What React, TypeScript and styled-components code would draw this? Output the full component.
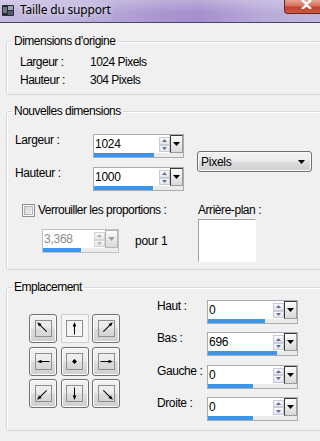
import styled, { createGlobalStyle } from 'styled-components';

const GlobalStyle = createGlobalStyle`
    html, body {
        margin: 0;
        padding: 0;
        background: #f0f0f0;
    }
    body {
        font-family: "Liberation Sans", Arial, sans-serif;
        font-size: 11px;
        letter-spacing: -0.25px;
        color: #000;
    }
`;

const Window = styled.div`
    width: 320px;
    height: 441px;
    overflow: hidden;
    background: #f0f0f0;
    display: flex;
    flex-direction: column;
`;

const TitleBar = styled.div`
    height: 22px;
    flex: none;
    display: flex;
    align-items: flex-start;
    border-bottom: 1px solid #4a465c;
    background:
        linear-gradient(180deg, rgba(255, 255, 255, 0.25) 0%, rgba(255, 255, 255, 0) 60%),
        linear-gradient(90deg, #c4b9e0 0%, #bcafdb 25%, #a896cf 50%, #a48fcc 62%, #b8aad9 82%, #c2b6df 100%);
`;

const AppIcon = styled.svg`
    flex: none;
    margin: 5px 0 0 2px;
`;

const Title = styled.span`
    margin-left: 6px;
    font-family: "Noto Sans", "Open Sans", sans-serif;
    font-size: 12px;
    letter-spacing: -0.2px;
    line-height: 20px;
    color: #000;
    text-shadow: 0 0 6px rgba(255, 255, 255, 0.9);
`;

const CloseButton = styled.div`
    margin-left: auto;
    margin-right: -8px;
    width: 44px;
    height: 14px;
    box-sizing: border-box;
    border: 1px solid #5c2a26;
    border-top: none;
    border-radius: 0 0 4px 4px;
    display: flex;
    justify-content: center;
    align-items: flex-start;
    background: linear-gradient(180deg, #e7a394 0%, #d8705e 45%, #c2412c 55%, #c95a40 100%);
`;

const Body = styled.div`
    display: flex;
    flex-direction: column;
    padding: 12px 0 0 6px;
`;

const Group = styled.fieldset<{ $gap?: number }>`
    margin: ${(p) => p.$gap ?? 0}px 0 0 0;
    padding: 0;
    min-width: 0;
    width: 330px;
    box-sizing: border-box;
    border: 1px solid #d5d9dd;
    border-radius: 3px;
    box-shadow: inset 1px 1px 0 #fff;
`;

const Legend = styled.legend`
    margin-left: 5px;
    padding: 0 2px;
    line-height: 13px;
    font-size: 12px;
    letter-spacing: -0.5px;
`;

const InfoGrid = styled.div`
    display: grid;
    grid-template-columns: 70px auto;
    grid-auto-rows: 18px;
    align-items: center;
    padding: 5px 0 5px 13px;
    font-size: 12px;
    letter-spacing: -0.5px;
`;

const GroupContent = styled.div<{ $pad: string }>`
    padding: ${(p) => p.$pad};
`;

const Row = styled.div<{ $top?: number }>`
    display: flex;
    align-items: flex-start;
    margin-top: ${(p) => p.$top ?? 0}px;
`;

const FieldStack = styled.div<{ $gap: number }>`
    display: flex;
    flex-direction: column;
    gap: ${(p) => p.$gap}px;
`;

const FieldRow = styled.div`
    display: flex;
    align-items: flex-start;
`;

const FieldLabel = styled.span<{ $width: number }>`
    width: ${(p) => p.$width}px;
    line-height: 13px;
    flex: none;
    font-size: 12px;
    letter-spacing: -0.4px;
`;

/* spin field */
const SpinBox = styled.div<{ $width: number; $disabled?: boolean }>`
    width: ${(p) => p.$width}px;
    height: 24px;
    box-sizing: border-box;
    flex: none;
    border: 1px solid ${(p) => (p.$disabled ? '#c2c2c2' : '#a9acb2')};
    background: #fff;
    display: flex;
    flex-direction: column;
`;

const SpinTop = styled.div`
    height: 18px;
    display: flex;
`;

const SpinText = styled.span<{ $disabled?: boolean }>`
    flex: 1;
    padding-left: 1px;
    font-size: 12px;
    line-height: 19px;
    color: ${(p) => (p.$disabled ? '#8d8d8d' : '#000')};
`;

const SpinArrows = styled.div`
    width: 11px;
    margin: 2px 0 1px;
    display: flex;
    flex-direction: column;
`;

const SpinArrow = styled.div<{ $disabled?: boolean }>`
    flex: 1;
    box-sizing: border-box;
    border: 1px solid ${(p) => (p.$disabled ? '#d4d4d4' : '#c7ccd6')};
    background: linear-gradient(180deg, #fafafa, #e4e6ea);
    display: flex;
    align-items: center;
    justify-content: center;
`;

const DropButton = styled.div<{ $disabled?: boolean }>`
    width: 13px;
    box-sizing: border-box;
    border: 1px solid;
    border-color: ${(p) => (p.$disabled ? '#b5b5b5' : '#3a3a3a #9c9c9c #9c9c9c #3a3a3a')};
    background: linear-gradient(180deg, #fbfbfb, #d9d9d9);
    display: flex;
    align-items: center;
    justify-content: center;
`;

const SpinTrack = styled.div`
    height: 4px;
    background: #ebebeb;
`;

const SpinFill = styled.div<{ $fill: number }>`
    width: ${(p) => p.$fill}px;
    height: 100%;
    background: #3a96ea;
`;

function Triangle({ down, color }: { down?: boolean; color: string }): JSX.Element {
    return (
        <svg width="7" height="4" viewBox="0 0 7 4">
            <path d={down ? 'M0 0 H7 L3.5 4 Z' : 'M0 4 H7 L3.5 0 Z'} fill={color} />
        </svg>
    );
}

function SmallTriangle({ down, color }: { down?: boolean; color: string }): JSX.Element {
    return (
        <svg width="5" height="3" viewBox="0 0 5 3">
            <path d={down ? 'M0 0 H5 L2.5 3 Z' : 'M0 3 H5 L2.5 0 Z'} fill={color} />
        </svg>
    );
}

type SpinProps = {
    value: string,
    fill: number,
    width?: number,
    disabled?: boolean,
};

function SpinField({ value, fill, width = 91, disabled }: SpinProps): JSX.Element {
    const arrowColor = disabled ? '#b0b0b0' : '#5d6f9c';
    return (
        <SpinBox $width={width} $disabled={disabled}>
            <SpinTop>
                <SpinText $disabled={disabled}>{value}</SpinText>
                <SpinArrows>
                    <SpinArrow $disabled={disabled}><SmallTriangle color={arrowColor} /></SpinArrow>
                    <SpinArrow $disabled={disabled}><SmallTriangle down color={arrowColor} /></SpinArrow>
                </SpinArrows>
                <DropButton $disabled={disabled}>
                    <Triangle down color={disabled ? '#a0a0a0' : '#000'} />
                </DropButton>
            </SpinTop>
            <SpinTrack>
                <SpinFill $fill={fill} />
            </SpinTrack>
        </SpinBox>
    );
}

const Select = styled.div`
    margin: 17px 0 0 13px;
    width: 115px;
    height: 21px;
    box-sizing: border-box;
    border: 1px solid #707070;
    border-radius: 3px;
    background: linear-gradient(180deg, #f2f2f2 0%, #ebebeb 48%, #dddddd 52%, #cfcfcf 100%);
    box-shadow: inset 0 0 0 1px #fbfbfb;
    display: flex;
    align-items: center;
    justify-content: space-between;
    padding: 0 6px 0 3px;
    font-size: 12px;
`;

const LockColumn = styled.div`
    width: 183px;
    padding-left: 7px;
    box-sizing: border-box;
    display: flex;
    flex-direction: column;
`;

const CheckRow = styled.label`
    display: flex;
    align-items: center;
    gap: 3px;
    line-height: 13px;
    font-size: 12px;
    letter-spacing: -0.5px;
`;

const CheckBox = styled.span`
    width: 13px;
    height: 13px;
    box-sizing: border-box;
    border: 1px solid #8f8f8f;
    box-shadow: inset 0 0 0 1px #f4f4f4, inset 0 0 0 2px #b5b5b5;
    background-image: linear-gradient(135deg, #cfcfcf, #f7f7f7);
`;

const RatioRow = styled.div`
    display: flex;
    align-items: center;
    margin: 12px 0 0 20px;
    gap: 16px;
    font-size: 12px;
`;

const BackgroundColumn = styled.div`
    display: flex;
    flex-direction: column;
    gap: 2px;
    line-height: 13px;
    font-size: 12px;
    letter-spacing: -0.45px;
`;

const Swatch = styled.div`
    width: 58px;
    height: 43px;
    box-sizing: border-box;
    border: 1px solid;
    border-color: #a0a0a0 #ffffff #ffffff #a0a0a0;
    background: #fff;
`;

/* placement grid */
const DirectionGrid = styled.div`
    margin-top: 14px;
    display: grid;
    grid-template-columns: repeat(3, 28px);
    grid-auto-rows: 29px;
    gap: 3.5px;
`;

const DirButton = styled.div<{ $active?: boolean }>`
    box-sizing: border-box;
    display: flex;
    align-items: center;
    justify-content: center;
    border: 1px solid ${(p) => (p.$active ? '#cfcfcf' : '#707070')};
    border-radius: ${(p) => (p.$active ? '0' : '3px')};
    background: ${(p) => (p.$active
        ? '#f5f5f5'
        : 'linear-gradient(180deg, #f2f2f2 0%, #ebebeb 48%, #dddddd 52%, #cfcfcf 100%)')};
    box-shadow: ${(p) => (p.$active ? 'none' : 'inset 0 0 0 1px #fcfcfc')};
`;

const DirInner = styled.span`
    width: 17px;
    height: 17px;
    box-sizing: border-box;
    border: 1px solid #8e8e8e;
    display: flex;
`;

const ANGLES: Record<string, number> = {
    nw: -45, n: 0, ne: 45, w: -90, e: 90, sw: -135, s: 180, se: 135,
};

function DirIcon({ dir }: { dir: string }): JSX.Element {
    if (dir === 'c') {
        return (
            <svg width="15" height="15" viewBox="0 0 15 15">
                <path d="M7.5 5 L10 7.5 L7.5 10 L5 7.5 Z" fill="#000" />
            </svg>
        );
    }
    const diag = dir.length === 2;
    const tip = diag ? -1.5 : 1;
    const tail = diag ? 12 : 13.5;
    return (
        <svg width="15" height="15" viewBox="0 0 15 15">
            <g transform={`rotate(${ANGLES[dir]} 7.5 7.5)`}>
                <line x1="7.5" y1={tail} x2="7.5" y2={tip + 2} stroke="#000" strokeWidth="1" />
                <path d={`M7.5 ${tip} L9.3 ${tip + 4.5} L5.7 ${tip + 4.5} Z`} fill="#000" />
            </g>
        </svg>
    );
}

const DIRECTIONS = ['nw', 'n', 'ne', 'w', 'c', 'e', 'sw', 's', 'se'];

const PlacementFields = styled(FieldStack)`
    margin-left: 37px;
`;

function App(): JSX.Element {
    return (
        <>
            <GlobalStyle />
            <Window>
                <TitleBar>
                    <AppIcon width="12" height="11" viewBox="0 0 12 11">
                        <rect x="0" y="0" width="12" height="11" rx="1" fill="#2b2c33" />
                        <rect x="1" y="2" width="4" height="6" fill="#6f7480" />
                        <rect x="6" y="1" width="5" height="4" fill="#9aa4b6" />
                        <rect x="6" y="6" width="5" height="4" fill="#4d5a78" />
                    </AppIcon>
                    <Title>Taille du support</Title>
                    <CloseButton>
                        <svg width="11" height="9" viewBox="0 0 11 9">
                            <path d="M1 0 L5.5 4 L10 0 M1 9 L5.5 5 L10 9" stroke="#fff" strokeWidth="2.4" fill="none" />
                        </svg>
                    </CloseButton>
                </TitleBar>
                <Body>
                    <Group>
                        <Legend>Dimensions d’origine</Legend>
                        <InfoGrid>
                            <span>Largeur :</span>
                            <span>1024 Pixels</span>
                            <span>Hauteur :</span>
                            <span>304 Pixels</span>
                        </InfoGrid>
                    </Group>
                    <Group $gap={10}>
                        <Legend>Nouvelles dimensions</Legend>
                        <GroupContent $pad="16px 0 7px 8px">
                            <Row>
                                <FieldStack $gap={9}>
                                    <FieldRow>
                                        <FieldLabel $width={78}>Largeur :</FieldLabel>
                                        <SpinField value="1024" fill={60} />
                                    </FieldRow>
                                    <FieldRow>
                                        <FieldLabel $width={78}>Hauteur :</FieldLabel>
                                        <SpinField value="1000" fill={59} />
                                    </FieldRow>
                                </FieldStack>
                                <Select>
                                    <span>Pixels</span>
                                    <Triangle down color="#000" />
                                </Select>
                            </Row>
                            <Row $top={13}>
                                <LockColumn>
                                    <CheckRow>
                                        <CheckBox />
                                        Verrouiller les proportions :
                                    </CheckRow>
                                    <RatioRow>
                                        <SpinField value="3,368" fill={38} width={77} disabled />
                                        <span>pour 1</span>
                                    </RatioRow>
                                </LockColumn>
                                <BackgroundColumn>
                                    <span>Arrière-plan :</span>
                                    <Swatch />
                                </BackgroundColumn>
                            </Row>
                        </GroupContent>
                    </Group>
                    <Group $gap={11}>
                        <Legend>Emplacement</Legend>
                        <GroupContent $pad="6px 0 9px 22px">
                            <Row>
                                <DirectionGrid>
                                    {DIRECTIONS.map((d) => (
                                        <DirButton key={d} $active={d === 'n'}>
                                            <DirInner><DirIcon dir={d} /></DirInner>
                                        </DirButton>
                                    ))}
                                </DirectionGrid>
                                <PlacementFields $gap={8.3}>
                                    <FieldRow>
                                        <FieldLabel $width={50}>Haut :</FieldLabel>
                                        <SpinField value="0" fill={57} />
                                    </FieldRow>
                                    <FieldRow>
                                        <FieldLabel $width={50}>Bas :</FieldLabel>
                                        <SpinField value="696" fill={69} />
                                    </FieldRow>
                                    <FieldRow>
                                        <FieldLabel $width={50}>Gauche :</FieldLabel>
                                        <SpinField value="0" fill={45} />
                                    </FieldRow>
                                    <FieldRow>
                                        <FieldLabel $width={50}>Droite :</FieldLabel>
                                        <SpinField value="0" fill={45} />
                                    </FieldRow>
                                </PlacementFields>
                            </Row>
                        </GroupContent>
                    </Group>
                </Body>
            </Window>
        </>
    );
}

export default App;
